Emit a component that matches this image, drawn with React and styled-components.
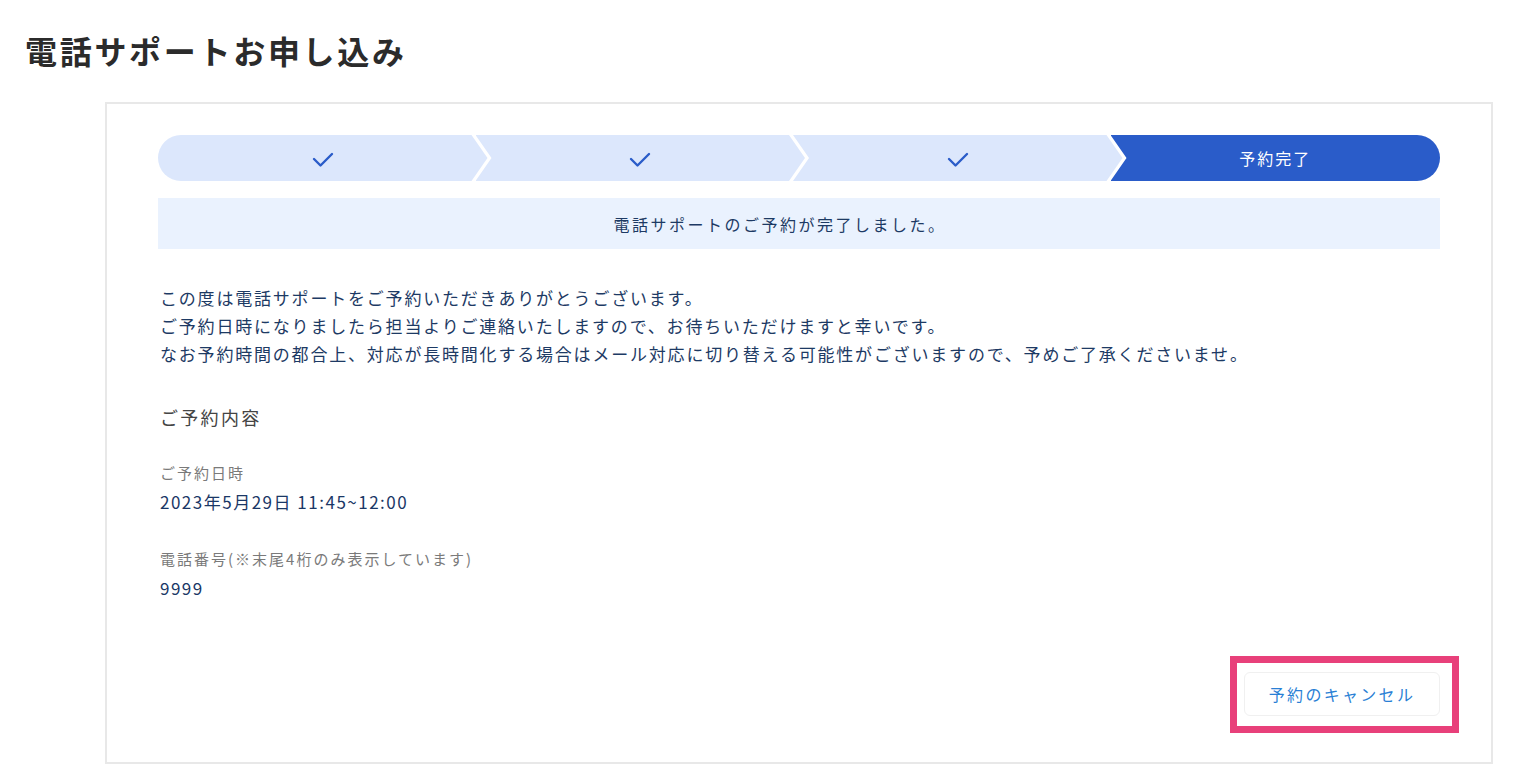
import React from 'react'
import styled, { createGlobalStyle } from 'styled-components'

const GlobalStyle = createGlobalStyle`
  * { box-sizing: border-box; }
  body {
    margin: 0;
    background: #ffffff;
    font-family: "Noto Sans CJK JP", "Noto Sans", sans-serif;
  }
`

const steps = [
  { label: '', done: true },
  { label: '', done: true },
  { label: '', done: true },
  { label: '予約完了', done: false },
]

const CheckIcon = () => (
  <svg width="22" height="16" viewBox="0 0 22 16" fill="none">
    <polyline points="2,7 8.5,13.5 20,2" stroke="#2a5cc9" strokeWidth="2.4" strokeLinecap="round" strokeLinejoin="round" />
  </svg>
)

const App = () => {
  return (
    <Page>
      <GlobalStyle />
      <Title>電話サポートお申し込み</Title>
      <Card>
        <Stepper>
          {steps.map((s, i) => (
            <Step key={i} $active={!s.done}>
              {s.done ? <CheckIcon /> : s.label}
            </Step>
          ))}
        </Stepper>
        <Notice>電話サポートのご予約が完了しました。</Notice>
        <Message>
          この度は電話サポートをご予約いただきありがとうございます。<br />
          ご予約日時になりましたら担当よりご連絡いたしますので、お待ちいただけますと幸いです。<br />
          なお予約時間の都合上、対応が長時間化する場合はメール対応に切り替える可能性がございますので、予めご了承くださいませ。
        </Message>
        <SectionTitle>ご予約内容</SectionTitle>
        <Detail>
          <DetailLabel>ご予約日時</DetailLabel>
          <DetailValue>2023年5月29日 11:45~12:00</DetailValue>
        </Detail>
        <Detail>
          <DetailLabel>電話番号(※末尾4桁のみ表示しています)</DetailLabel>
          <DetailValue>9999</DetailValue>
        </Detail>
        <Actions>
          <CancelButton type="button">予約のキャンセル</CancelButton>
        </Actions>
      </Card>
    </Page>
  )
}

const Page = styled.div`
padding: 28px 21px 19px 25px;
`

const Title = styled.h1`
margin: 0 0 30px;
font-size: 32px;
line-height: 44px;
font-weight: 700;
letter-spacing: 2.7px;
color: #2b2b2b;
`

const Card = styled.div`
margin-left: 80px;
border: 2px solid #e8e8e8;
padding: 31px 51px 46px 51px;
display: flex;
flex-direction: column;
`

const Stepper = styled.ol`
display: flex;
height: 46px;
margin: 0;
padding: 0;
list-style: none;
border-radius: 23px;
overflow: hidden;
`

const Step = styled.li`
flex: 1;
display: flex;
align-items: center;
justify-content: center;
background: ${p => (p.$active ? '#2a5cc9' : '#dce7fc')};
color: #ffffff;
font-size: 16px;
letter-spacing: 2px;
clip-path: polygon(0 0, calc(100% - 16px) 0, 100% 50%, calc(100% - 16px) 100%, 0 100%, 16px 50%);
& + & {
  margin-left: -12px;
}
&:first-child {
  clip-path: polygon(0 0, calc(100% - 16px) 0, 100% 50%, calc(100% - 16px) 100%, 0 100%);
}
&:last-child {
  clip-path: polygon(0 0, 100% 0, 100% 100%, 0 100%, 16px 50%);
}
svg {
  margin-top: 3px;
}
`

const Notice = styled.div`
margin-top: 17px;
height: 51px;
padding-right: 38px;
display: flex;
align-items: center;
justify-content: center;
background: #eaf2fe;
color: #1d3a64;
font-size: 16px;
letter-spacing: 2.5px;
`

const Message = styled.p`
margin: 35px 0 0 2px;
font-size: 17px;
line-height: 28px;
letter-spacing: 1.8px;
color: #1d3a64;
`

const SectionTitle = styled.h2`
margin: 35px 0 0 2px;
font-size: 18px;
line-height: 28px;
font-weight: 400;
letter-spacing: 2.3px;
color: #444444;
`

const Detail = styled.div`
display: flex;
flex-direction: column;
gap: 5px;
margin: 30px 0 0 2px;
& + & {
  margin-top: 33px;
}
`

const DetailLabel = styled.span`
font-size: 15px;
line-height: 24px;
letter-spacing: 2px;
color: #7a7a7a;
`

const DetailValue = styled.span`
font-size: 17px;
line-height: 24px;
font-weight: 400;
letter-spacing: 1.5px;
color: #1a3766;
`

const Actions = styled.div`
display: flex;
justify-content: flex-end;
margin-top: 72px;
`

const CancelButton = styled.button`
position: relative;
width: 196px;
height: 44px;
border: 1px solid #f0f0f0;
border-radius: 6px;
background: #ffffff;
color: #2a7fd5;
font-family: inherit;
font-size: 16px;
letter-spacing: 2.3px;
cursor: pointer;
&::after {
  content: '';
  position: absolute;
  top: -17px;
  bottom: -18px;
  left: -15px;
  right: -20px;
  border: 7px solid #e8407a;
  pointer-events: none;
}
`

export default App
